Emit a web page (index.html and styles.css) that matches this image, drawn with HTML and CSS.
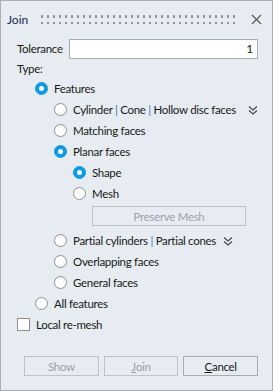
FILE: index.html
```html
<!DOCTYPE html>
<html>
<head>
<meta charset="utf-8">
<link rel="stylesheet" href="styles.css">
</head>
<body>
<div class="dialog">
  <div class="titlebar">
    <span class="title">Join</span>
    <span class="grip"></span>
    <svg class="close" width="11" height="11" viewBox="0 0 11 11"><path d="M1 1L10 10M10 1L1 10" stroke="#555" stroke-width="1.1" fill="none"/></svg>
  </div>
  <div class="content">
    <div class="tol-row">
      <span class="label">Tolerance</span>
      <div class="input">1</div>
    </div>
    <div class="type-row">Type:</div>
    <div class="opt lvl1"><span class="radio on"></span><span>Features</span></div>
    <div class="opt lvl2"><span class="radio"></span><span>Cylinder <b class="pipe">|</b> Cone <b class="pipe">|</b> Hollow disc faces</span><svg class="chev wide" width="10" height="10" viewBox="0 0 10 10"><path d="M1 1.5L5 5L9 1.5M1 5.5L5 9L9 5.5" stroke="#444" stroke-width="1.1" fill="none"/></svg></div>
    <div class="opt lvl2"><span class="radio"></span><span>Matching faces</span></div>
    <div class="opt lvl2"><span class="radio on"></span><span>Planar faces</span></div>
    <div class="opt lvl3"><span class="radio on"></span><span>Shape</span></div>
    <div class="opt lvl3"><span class="radio"></span><span>Mesh</span></div>
    <div class="btn-row"><div class="btn disabled preserve">Preserve Mesh</div></div>
    <div class="opt lvl2 partial"><span class="radio"></span><span>Partial cylinders <b class="pipe">|</b> Partial cones</span><svg class="chev" width="10" height="10" viewBox="0 0 10 10"><path d="M1 1.5L5 5L9 1.5M1 5.5L5 9L9 5.5" stroke="#444" stroke-width="1.1" fill="none"/></svg></div>
    <div class="opt lvl2"><span class="radio"></span><span>Overlapping faces</span></div>
    <div class="opt lvl2"><span class="radio"></span><span>General faces</span></div>
    <div class="opt lvl1"><span class="radio"></span><span>All features</span></div>
    <div class="opt check-row"><span class="check"></span><span>Local re-mesh</span></div>
    <div class="actions">
      <div class="btn disabled">Show</div>
      <div class="btn disabled"><u>J</u>oin</div>
      <div class="btn"><u>C</u>ancel</div>
    </div>
  </div>
</div>
</body>
</html>
```
FILE: styles.css
```css
* { box-sizing: border-box; }
html, body { margin: 0; padding: 0; }
body {
  font-family: Lato, "Liberation Sans", sans-serif;
  font-size: 11.5px;
  letter-spacing: -0.3px;
  color: #1a1a1a;
  background: #e6ecf1;
  white-space: nowrap;
}
.dialog {
  width: 273px;
  height: 391px;
  border: 1px solid #a9aeb3;
  background: #e6ecf1;
  display: flex;
  flex-direction: column;
}
.titlebar {
  height: 36px;
  display: flex;
  align-items: center;
  padding-left: 6px;
  padding-right: 10px;
}
.title { width: 34px; color: #1a2a50; font-size: 12px; letter-spacing: 0; }
.grip {
  flex: 1;
  height: 9px;
  margin-right: 16px;
  margin-top: 1px;
  background-image: radial-gradient(circle, #8e9297 1.1px, transparent 1.3px);
  background-size: 6px 7px;
  background-position: -2px -2px;
}
.close { display: block; flex: none; }
.content { padding: 1px 14px 0 15px; flex: 1; display: flex; flex-direction: column; }
.tol-row { height: 21px; display: flex; align-items: center; }
.label { width: 53px; padding-left: 1px; }
.input {
  flex: 1;
  height: 20px;
  background: #fff;
  border: 1px solid #a8acb0;
  text-align: right;
  padding-right: 4px;
  line-height: 18px;
  font-size: 12px;
}
.type-row { height: 19px; line-height: 19px; padding-left: 1px; }
.opt { height: 21px; display: flex; align-items: center; gap: 6px; }
.lvl1 { padding-left: 19px; }
.lvl2 { padding-left: 38px; }
.lvl3 { padding-left: 57px; }
.radio {
  width: 13px; height: 13px; border-radius: 50%;
  background: #fff; border: 1px solid #8d8f92;
  flex: none; position: relative;
}
.radio.on { background: #0e9be2; border-color: #0e9be2; }
.radio.on::after {
  content: ""; position: absolute; left: 3px; top: 3px;
  width: 5px; height: 5px; border-radius: 50%; background: #fff;
}
.pipe { font-weight: normal; color: #2e79c0; }
.chev { margin-left: 1px; flex: none; }
.chev.wide { margin-left: 6px; }
.btn-row { padding-left: 76px; padding-right: 10px; margin-top: 2px; margin-bottom: 4px; }
.btn {
  height: 20px; border: 1px solid #a9adb1; background: #e6ecf1;
  display: flex; align-items: center; justify-content: center;
  color: #1a1a1a;
}
.btn.disabled { color: #9ca1a6; border-color: #bfc3c7; }
.preserve { width: 154px; }
.check-row { padding-left: 1px; }
.check { width: 13px; height: 13px; background: #fff; border: 1px solid #8d8f92; flex: none; }
.actions { margin-top: 21px; display: flex; gap: 5px; padding-left: 8px; }
.actions .btn { width: 75px; }
```
